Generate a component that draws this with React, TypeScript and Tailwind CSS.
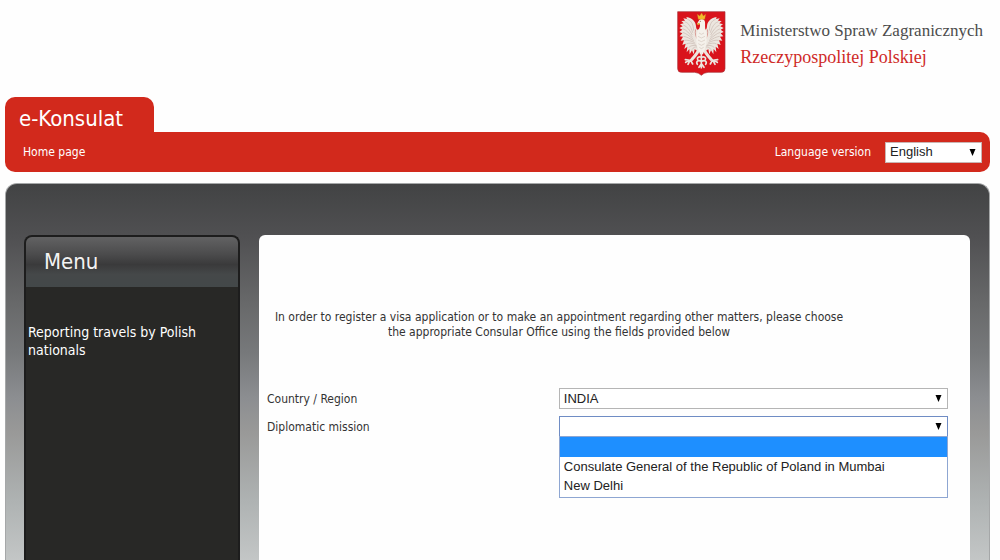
import { useState, type ReactNode } from "react";

const UI = "font-['DejaVu_Sans_Condensed','DejaVu_Sans',sans-serif]";
const FIELD =
  "h-full w-full appearance-none border bg-white pl-1 pr-6 font-['Liberation_Sans',sans-serif] text-[13px] leading-4 text-[#222] outline-none";

function SelectBox({
  id,
  value,
  onChange,
  options,
  border,
  className,
  children,
}: {
  id: string;
  value: string;
  onChange: (value: string) => void;
  options: string[];
  border: string;
  className: string;
  children?: ReactNode;
}) {
  return (
    <div className={`relative h-[21px] ${className}`}>
      <select
        id={id}
        value={value}
        onChange={(e) => onChange(e.target.value)}
        className={`${FIELD} ${border}`}
      >
        {options.map((o) => (
          <option key={o} value={o}>
            {o}
          </option>
        ))}
      </select>
      <svg
        viewBox="0 0 7 7"
        className="pointer-events-none absolute right-1.5 top-[7px] h-[7px] w-[7px]"
        aria-hidden="true"
      >
        <path d="M0.5 0h6L3.5 7z" fill="#000" />
      </svg>
      {children}
    </div>
  );
}

function Wing() {
  return (
    <g>
      <path
        d="M117 88C112 92 108 86 108 78C107 66 99 54 79 51L81 57L70 55L75 62L64 63L71 70L60 73L68 79L58 84L67 89L58 96L67 100L59 109L69 110L62 122L72 121L67 135L77 131L73 147L82 140L80 157L88 147L89 163L96 151L101 163L104 148L112 152L121 135Z"
        fill="#ece6df"
      />
      <path
        d="M82 58C96 62 100 76 101 92M74 65C88 70 93 82 98 98M70 75C82 80 89 90 97 105M68 86C80 90 87 100 98 112M68 97C80 101 88 108 100 118M70 109C80 110 90 116 102 123M73 121C83 119 94 123 104 128M79 132C86 128 97 129 107 133M86 143C91 137 99 135 110 137M96 149C99 143 105 140 112 141"
        fill="none"
        stroke="#c9b8b0"
        strokeWidth="2"
      />
      <path d="M107 88C104 100 107 112 115 122" fill="none" stroke="#cf7770" strokeWidth="2" />
    </g>
  );
}

function Leg() {
  return (
    <g fill="none" stroke="#ece6df" strokeLinecap="round" strokeLinejoin="round">
      <path d="M117 148C113 160 105 167 96 178" strokeWidth="9" />
      <path d="M99 174L90 181M90 181L76 179M90 181L77 187M90 181L84 193M92 181L98 192" strokeWidth="5" />
    </g>
  );
}

function Emblem() {
  return (
    <svg viewBox="51 33 147 195" className="h-[65px] w-[49px] shrink-0" role="img" aria-label="Godło">
      <path
        d="M53 35H195V206Q195 217 183 217H144Q131 218 124 226Q117 218 104 217H65Q53 217 53 206Z"
        fill="#d9131b"
        stroke="#a8333a"
        strokeWidth="2"
      />
      <Wing />
      <g transform="translate(249 0) scale(-1 1)">
        <Wing />
      </g>
      <Leg />
      <g transform="translate(249 0) scale(-1 1)">
        <Leg />
      </g>
      <path
        d="M118 60C124 55 134 57 135 66C136 76 134 82 137 91C143 105 141 133 134 149L129 163H120L115 149C107 133 107 105 114 91C119 84 122 78 119 71L111 72L114 66Z"
        fill="#f5f1eb"
      />
      <path
        d="M117 99L124 103L132 99M114 109L124 114L135 109M114 120L124 125L135 120M115 131L124 136L134 131M118 142L124 146L131 142"
        fill="none"
        stroke="#d3c5bc"
        strokeWidth="2"
      />
      <path
        d="M124 160V203M124 172C117 168 110 173 113 179M125 172C132 168 139 173 136 179M124 184C114 178 107 186 112 193M125 184C135 178 142 186 137 193M124 192L117 202M125 192L132 202"
        fill="none"
        stroke="#ece6df"
        strokeWidth="5"
        strokeLinecap="round"
      />
      <circle cx="121" cy="64" r="1.5" fill="#70443b" />
      <path d="M111 70L119 68L119 73L113 76Z" fill="#e5ad35" />
      <path d="M115 58L112 43L119 48L125 39L130 48L137 43L134 58Z" fill="#f2b929" stroke="#c98a20" />
    </svg>
  );
}

const MISSIONS = ["", "Consulate General of the Republic of Poland in Mumbai", "New Delhi"];

export default function App() {
  const [language, setLanguage] = useState("English");
  const [country, setCountry] = useState("INDIA");
  const [mission, setMission] = useState("");

  return (
    <div className={`flex min-h-screen flex-col bg-[#fefefe] pl-[5px] pr-2.5 text-xs ${UI}`}>
      <header className="flex h-[97px] items-start justify-end gap-3.5 pr-[7px] pt-[11px]">
        <Emblem />
        <div className="pt-[7px] font-['Liberation_Serif',serif]">
          <p className="text-[17px] leading-[26px] text-[#4c4c4c]">Ministerstwo Spraw Zagranicznych</p>
          <p className="text-lg leading-[26px] text-[#cf2a27]">Rzeczypospolitej Polskiej</p>
        </div>
      </header>

      <div className="flex">
        <h1 className="h-[35px] w-[149px] rounded-t-[10px] bg-[#d2291c] pl-3.5 pt-1.5 text-[22px] leading-8 text-white">
          e-Konsulat
        </h1>
      </div>
      <nav className="flex h-10 items-center justify-between rounded-b-[10px] rounded-tr-[10px] bg-[#d2291c] pl-[18px] pr-2 text-white">
        <a href="#home">Home page</a>
        <div className="flex items-center gap-3.5">
          <label htmlFor="language">Language version</label>
          <SelectBox
            id="language"
            value={language}
            onChange={setLanguage}
            options={["English", "Polski"]}
            border="border-[#c9b5b3]"
            className="w-[97px]"
          />
        </div>
      </nav>

      <div className="mt-[11px] flex flex-1 items-stretch gap-[19px] rounded-t-xl border border-b-0 border-[#a5a7a8] bg-[linear-gradient(to_bottom,#424344_0%,#505052_14%,#68696a_32%,#77797b_45%,#8c8e91_57%,#999998_66%,#aeb2b2_84%,#c3c6c6_100%)] pl-[18px] pr-[19px] pt-[51px]">
        <aside className="w-[216px] shrink-0 overflow-hidden rounded-t-lg border-2 border-b-0 border-[#1d1d1d] bg-[#282826] text-white">
          <h2 className="h-[50px] bg-[linear-gradient(to_bottom,#626263_0%,#4b4b4c_35%,#3a3a3b_55%,#454849_75%,#434849_100%)] pl-[18px] text-[22px] leading-[50px] text-[#f3f3f3]">
            Menu
          </h2>
          <a href="#travels" className="mt-9 block w-48 pl-0.5 text-sm leading-[18px]">
            Reporting travels by Polish nationals
          </a>
        </aside>

        <main className="flex-1 rounded-t-md bg-[#fefefe] px-2 pt-[75px] text-[#333]">
          <p className="w-[584px] max-w-full text-center leading-[15px]">
            In order to register a visa application or to make an appointment regarding other matters, please choose
            the appropriate Consular Office using the fields provided below
          </p>
          <div className="mr-3.5 mt-12 grid grid-cols-[minmax(0,3fr)_minmax(0,4fr)] items-center gap-y-[7px]">
            <label htmlFor="country">Country / Region</label>
            <SelectBox
              id="country"
              value={country}
              onChange={setCountry}
              options={["INDIA"]}
              border="border-[#b5b5b5]"
              className="w-full"
            />
            <label htmlFor="mission">Diplomatic mission</label>
            <SelectBox
              id="mission"
              value={mission}
              onChange={setMission}
              options={MISSIONS}
              border="border-[#6f8cc4]"
              className="w-full"
            >
              <ul
                role="listbox"
                aria-label="Diplomatic mission"
                className="absolute inset-x-0 top-5 border border-[#8ea6d2] bg-white pb-0.5 font-['Liberation_Sans',sans-serif] text-[13px] leading-[19px] text-[#222]"
              >
                {MISSIONS.map((m) => (
                  <li
                    key={m}
                    role="option"
                    aria-selected={m === mission}
                    onClick={() => setMission(m)}
                    className={m === mission ? "h-5 bg-[#1e8fff] px-1" : "h-[19px] px-1"}
                  >
                    {m}
                  </li>
                ))}
              </ul>
            </SelectBox>
          </div>
        </main>
      </div>
    </div>
  );
}
